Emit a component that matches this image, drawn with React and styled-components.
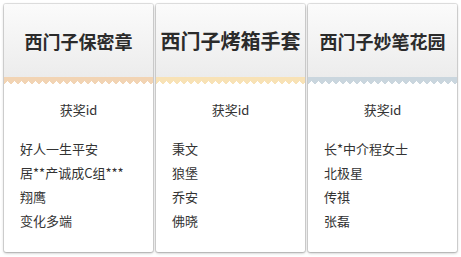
import React from 'react';
import styled, { createGlobalStyle } from 'styled-components';

const GlobalStyle = createGlobalStyle`
  html, body {
    margin: 0;
    padding: 0;
    background: #fff;
  }
  body {
    font-family: "Noto Sans CJK SC", "Liberation Sans", sans-serif;
    color: #333;
  }
`

const Board = styled.div`
  display: flex;
  gap: 3px;
  padding: 4px;
  width: 461px;
  box-sizing: border-box;
`

const Card = styled.div`
  width: 149px;
  height: 248px;
  display: flex;
  flex-direction: column;
  background: #fff;
  border-radius: 2px;
  box-shadow: 0 0 0 1px rgba(0, 0, 0, 0.1), 0 1px 3px rgba(0, 0, 0, 0.3);
  overflow: hidden;
`

const Header = styled.div`
  height: 73px;
  display: flex;
  align-items: center;
  justify-content: center;
  background: linear-gradient(#fbfbfb, #ececec);
`

const Title = styled.h2`
  margin: 0;
  font-size: ${p => p.size || 18}px;
  font-weight: bold;
  line-height: 1;
  color: #2b2b2b;
  white-space: nowrap;
`

const Zigzag = styled.div`
  height: 8px;
  background:
    linear-gradient(135deg, ${p => p.color} 25%, transparent 25%) 0 4px / 7px 7px repeat-x,
    linear-gradient(225deg, ${p => p.color} 25%, transparent 25%) 0 4px / 7px 7px repeat-x,
    linear-gradient(${p => p.color}, ${p => p.color}) 0 0 / 100% 4px no-repeat;
`

const Body = styled.div`
  flex: 1;
  padding: 13px 16px 0;
`

const Label = styled.div`
  text-align: center;
  font-size: 13px;
  line-height: 24px;
  margin-bottom: 15px;
`

const List = styled.ul`
  list-style: none;
  margin: 0;
  padding: 0;
`

const Item = styled.li`
  font-size: 13px;
  line-height: 24px;
  white-space: nowrap;
`

const cards = [
  { title: '西门子保密章', size: 18, color: '#f2d4b4', winners: ['好人一生平安', '居**产诚成C组***', '翔鹰', '变化多端'] },
  { title: '西门子烤箱手套', size: 20, color: '#f8e2b6', winners: ['秉文', '狼堡', '乔安', '佛晓'] },
  { title: '西门子妙笔花园', size: 18, color: '#cad6de', winners: ['长*中介程女士', '北极星', '传祺', '张磊'] },
]

export default function App() {
  return (
    <>
      <GlobalStyle />
      <Board>
        {cards.map(c => (
          <Card key={c.title}>
            <Header>
              <Title size={c.size}>{c.title}</Title>
            </Header>
            <Zigzag color={c.color} />
            <Body>
              <Label>获奖id</Label>
              <List>
                {c.winners.map(w => <Item key={w}>{w}</Item>)}
              </List>
            </Body>
          </Card>
        ))}
      </Board>
    </>
  )
}
